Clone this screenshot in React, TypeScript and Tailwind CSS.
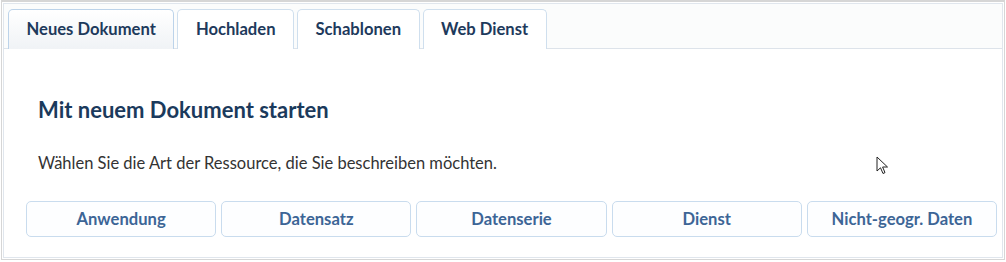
import React from "react";

const tabs = ["Neues Dokument", "Hochladen", "Schablonen", "Web Dienst"];
const buttons = ["Anwendung", "Datensatz", "Datenserie", "Dienst", "Nicht-geogr. Daten"];

export default function App() {
  return (
    <div
      className="relative w-[1006px] h-[262px] bg-white"
      style={{ fontFamily: "Lato, 'Open Sans', sans-serif" }}
    >
      <div className="ml-[1px] w-[1004px] h-[260px] border border-[#d6d6d6] border-t-2 p-[1px]">
        <div className="h-full border border-[#e0e6ed] flex flex-col">
          <div className="h-[45px] bg-[#fbfcfc] border-b border-[#dde3ea] flex items-end gap-[3px] pl-[4px]">
            {tabs.map((t, i) => (
              <div
                key={t}
                className={
                  "h-[40px] -mb-[1px] px-[17.5px] flex items-center rounded-t-[5px] border border-b-0 text-[16.6px] font-bold text-[#1e3a5c] " +
                  (i === 0
                    ? "border-[#bcd3ea] bg-gradient-to-b from-white to-[#f0f3f6]"
                    : "border-[#cfdfee] bg-white")
                }
              >
                {t}
              </div>
            ))}
          </div>
          <div className="flex-1 pl-[22px] pr-[5px] pt-[47px]">
            <h2 className="pl-[12px] text-[22px] leading-[28px] font-bold text-[#1b3a5c]">
              Mit neuem Dokument starten
            </h2>
            <p className="pl-[12px] mt-[29px] text-[16.5px] leading-[20px] text-[#333333]">
              Wählen Sie die Art der Ressource, die Sie beschreiben möchten.
            </p>
            <div className="mt-[28px] flex gap-[5px]">
              {buttons.map((b) => (
                <button
                  key={b}
                  className="flex-1 h-[36px] rounded-[5px] border border-[#c9dcee] bg-[#fdfeff] text-[16.6px] font-bold text-[#3c6596]"
                >
                  {b}
                </button>
              ))}
            </div>
          </div>
        </div>
      </div>
      <svg
        className="absolute left-[876px] top-[156px]"
        width="14"
        height="20"
        viewBox="0 0 14 20"
      >
        <path
          d="M1 1 L1 15 L4.5 11.8 L7 17.5 L9 16.6 L6.6 11 L11.5 11 Z"
          fill="white"
          stroke="#222"
          strokeWidth="1"
          strokeLinejoin="round"
        />
      </svg>
    </div>
  );
}
